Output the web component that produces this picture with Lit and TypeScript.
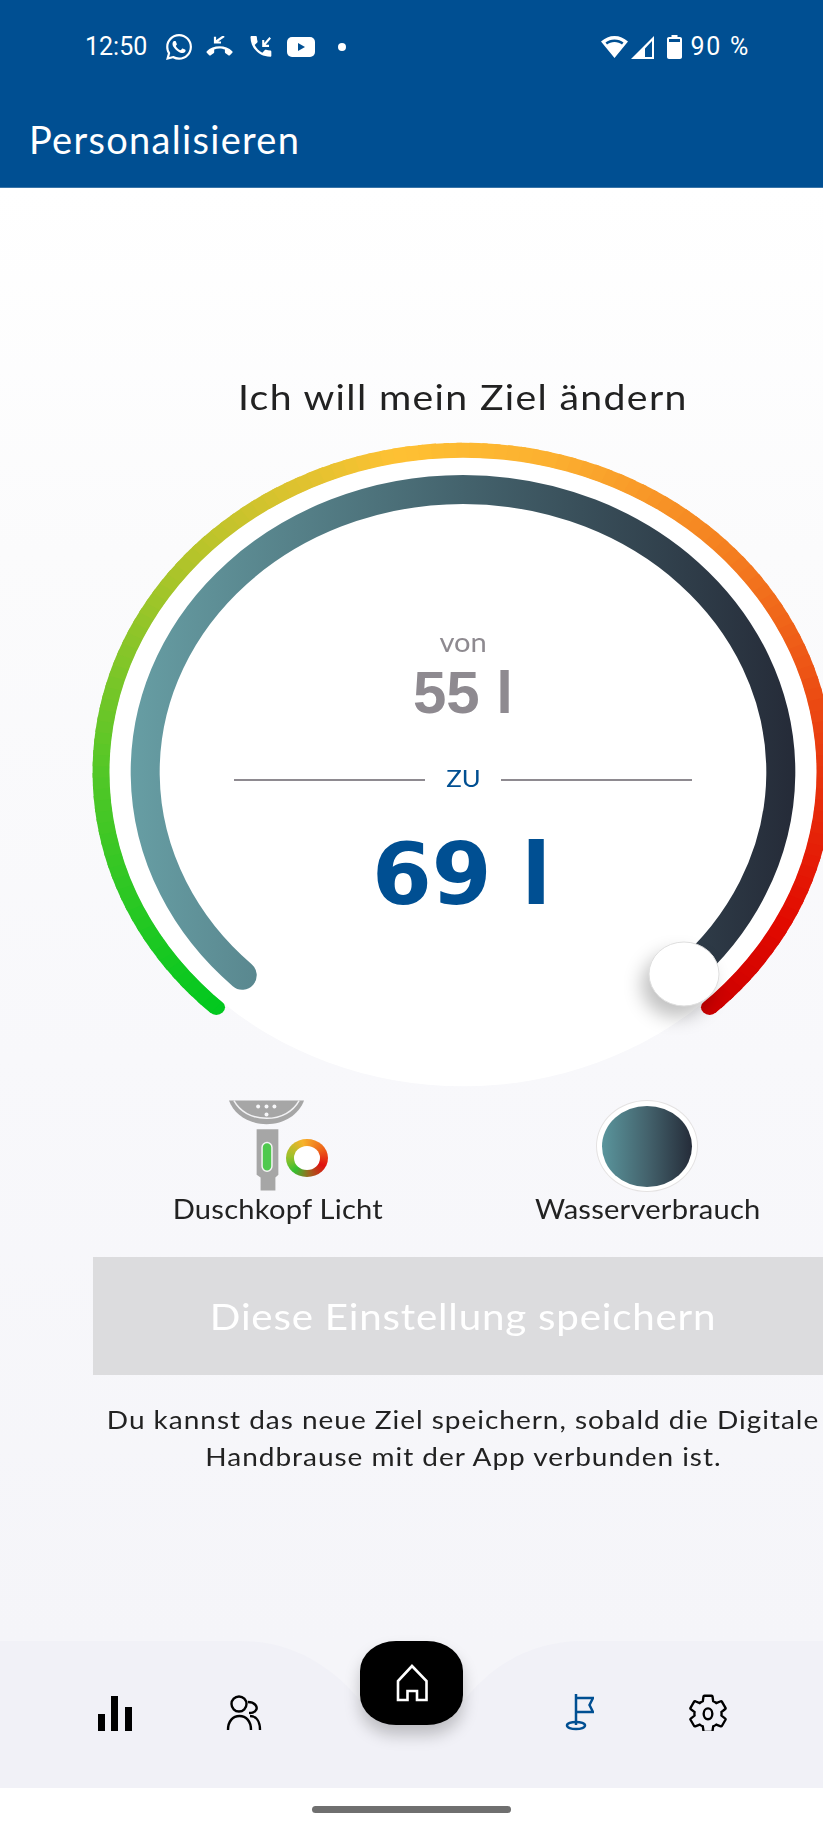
import { LitElement, html, css, svg } from "lit";
import { customElement } from "lit/decorators.js";

const CX = 463, CY = 772, SX = 1.125;
const STOPS: [number, number[]][] = [
  [0, [2, 200, 31]], [0.17, [82, 199, 39]], [0.33, [184, 196, 42]], [0.46, [254, 193, 51]],
  [0.55, [252, 176, 48]], [0.67, [244, 127, 32]], [0.83, [232, 52, 13]], [0.93, [226, 10, 0]], [1, [205, 0, 0]],
];
function colorAt(t: number) {
  for (let i = 1; i < STOPS.length; i++) {
    if (t <= STOPS[i][0]) {
      const [a, ca] = STOPS[i - 1], [b, cb] = STOPS[i];
      const f = (t - a) / (b - a);
      return `rgb(${ca.map((v, k) => Math.round(v + (cb[k] - v) * f)).join(",")})`;
    }
  }
  return "rgb(205,0,0)";
}
function pt(r: number, deg: number) {
  // deg measured clockwise from straight down
  const a = (deg * Math.PI) / 180;
  return [-Math.sin(a) * r, Math.cos(a) * r];
}
function arc(r: number, d0: number, d1: number) {
  const [x0, y0] = pt(r, d0), [x1, y1] = pt(r, d1);
  return `M${x0.toFixed(2)} ${y0.toFixed(2)}A${r} ${r} 0 ${d1 - d0 > 180 ? 1 : 0} 1 ${x1.toFixed(2)} ${y1.toFixed(2)}`;
}
const START = 43, END = 317, N = 137;
const segs = Array.from({ length: N }, (_, i) => {
  const t0 = i / N, t1 = (i + 1) / N;
  const d0 = START + (END - START) * t0, d1 = START + (END - START) * Math.min(1, t1 + 0.003);
  return { d: arc(321.5, d0, d1), c: colorAt((t0 + t1) / 2) };
});
const [gx, gy] = pt(321.5, START), [rx, ry] = pt(321.5, END);

@customElement("app-root")
export class AppRoot extends LitElement {
  static styles = css`
    :host { display: flex; flex-direction: column; width: 823px; height: 1832px; overflow: hidden; background: #fff; font-family: Lato, "Liberation Sans", sans-serif; color: #222; }
    header { height: 188px; flex: none; box-sizing: border-box; background: #004f92; border-bottom: 1px solid #3a75a8; color: #fff; }
    .status { height: 94px; box-sizing: border-box; padding: 34px 73px 0 85px; display: flex; justify-content: space-between; align-items: flex-start; font-family: Roboto, sans-serif; font-size: 25px; line-height: 26px; }
    .group { display: flex; align-items: center; height: 26px; }
    .group svg { display: block; fill: #fff; flex: none; }
    .pct { margin-left: 9px; letter-spacing: 1.7px; }
    .title { margin-left: 29px; font-size: 38px; line-height: 44px; margin-top: 23px; letter-spacing: 1.3px; font-weight: 400; }
    .main { height: 1453px; flex: none; display: flex; flex-direction: column; box-sizing: border-box; width: 740px; margin-left: 93px; padding-top: 188px; }
    .bg { position: absolute; left: 0; width: 823px; top: 188px; height: 1453px; background: linear-gradient(#fff 0%, #fbfbfc 25%, #f8f8fb 60%, #f5f5f9 100%); }
    .wide { display: inline-block; transform: scaleX(1.12); white-space: nowrap; }
    .head { position: relative; text-align: center; font-size: 35px; line-height: 40px; color: #222; height: 40px; letter-spacing: 1.2px; }
    .gauge { position: relative; height: 660px; margin-top: 14px; }
    .gauge > svg { display: block; overflow: visible; }
    .knob { fill: #fff; stroke: #dedede; stroke-width: 1; filter: drop-shadow(-7px 11px 9px rgba(0, 0, 0, 0.24)); }
    .center { position: absolute; inset: 0; box-sizing: border-box; padding-top: 197px; display: flex; flex-direction: column; align-items: center; }
    .von { font-size: 26px; line-height: 30px; color: #8e8a90; }
    .old { font-family: "Liberation Sans", sans-serif; font-weight: 700; font-size: 60px; line-height: 58px; color: #8e8a90; margin-top: 7px; }
    .div { width: 458px; height: 30px; margin-top: 43px; display: flex; align-items: center; color: #004f92; }
    .div i { flex: 1; height: 2px; background: #8e8a90; }
    .div span { width: 76px; text-align: center; font-size: 23px; line-height: 26px; }
    .div > span { padding-bottom: 4px; }
    .div .wide { width: auto; }
    .new { font-family: "DejaVu Sans", sans-serif; font-weight: 700; font-size: 86px; line-height: 85px; color: #004f92; margin-top: 37px; margin-right: 3px; white-space: pre; }
    .legend { position: relative; display: grid; grid-template-columns: 1fr 1fr; margin-top: 10px; }
    .cell { display: flex; flex-direction: column; align-items: center; }
    .cell svg { display: block; }
    .lbl { font-size: 26px; line-height: 30px; margin-top: 2px; color: #222; letter-spacing: 0.2px; }
    .disc { width: 102px; height: 92px; box-sizing: border-box; border-radius: 50%; border: 1px solid #e4e2e2; background: #fff; display: flex; align-items: center; justify-content: center; position: relative; left: -1px; }
    .disc b { display: block; width: 90px; height: 81px; border-radius: 50%; background: linear-gradient(90deg, #5a959c, #44636d 50%, #252c39); }
    .ring { width: 42px; height: 38px; box-sizing: border-box; border-radius: 50%; background: conic-gradient(from 225deg, #35c030 0deg, #9cc02a 50deg, #f7b32b 120deg, #ee6a1a 190deg, #e01010 250deg, #9a6a20 310deg, #35c030 360deg); display: flex; align-items: center; justify-content: center; }
    .ring u { display: block; width: 26px; height: 24px; border-radius: 50%; background: #fff; }
    .shower { display: flex; align-items: flex-start; height: 92px; width: 100px; position: relative; }
    .shower .ring { margin-top: 39px; margin-left: -21px; position: relative; flex: none; }
    .btn { position: relative; height: 118px; margin-top: 33px; background: #dcdcde; color: #fff; display: flex; align-items: center; justify-content: center; font-size: 36px; letter-spacing: 0.7px; }
    .note { position: relative; margin-top: 26px; text-align: center; font-size: 25px; line-height: 37px; color: #222; letter-spacing: 0.87px; }
    .note div { height: 37px; }
    nav { position: relative; height: 147px; flex: none; background: #f1f1f7; display: grid; grid-template-columns: 129px 129px 206px 129px 129px; padding-left: 50.5px; box-sizing: border-box; }
    .notch { position: absolute; left: 0; top: 0; }
    .item { position: relative; height: 108px; display: flex; align-items: flex-end; justify-content: center; padding-bottom: 18px; box-sizing: border-box; }
    .item svg { display: block; }
    .fabwrap { position: relative; display: flex; justify-content: center; }
    .fab { width: 103px; height: 84px; background: #000; border-radius: 36px / 30px; display: flex; align-items: center; justify-content: center; box-shadow: 0 10px 16px rgba(0, 0, 0, 0.22); }
    .foot { flex: 1; display: flex; justify-content: center; padding-top: 18px; }
    .foot i { display: block; width: 199px; height: 7px; border-radius: 4px; background: #6f6f6f; }
  `;

  private gauge() {
    return html`<svg width="740" height="660" viewBox="93 430 740 660">
      <defs>
        <linearGradient id="inner" gradientUnits="userSpaceOnUse" x1="130" y1="0" x2="795" y2="0">
          <stop offset="0" stop-color="#679ea4" /><stop offset="0.5" stop-color="#44636d" /><stop offset="1" stop-color="#252b38" />
        </linearGradient>
      </defs>
      <g transform="translate(${CX} ${CY}) scale(${SX} 1)">
        <circle cx=${gx} cy=${gy} r="7.75" fill=${colorAt(0)} />
        <circle cx=${rx} cy=${ry} r="7.75" fill=${colorAt(1)} />
        ${segs.map((s) => svg`<path d=${s.d} fill="none" stroke=${s.c} stroke-width="15.5" />`)}
      </g>
      <ellipse cx=${CX} cy=${CY} rx="353.5" ry="314.2" fill="#fff" />
      <path d="M${CX + pt(282.5, 44)[0] * SX} ${CY + pt(282.5, 44)[1]}A${282.5 * SX} 282.5 0 1 1 ${CX + pt(282.5, 316)[0] * SX} ${CY + pt(282.5, 316)[1]}"
        fill="none" stroke="url(#inner)" stroke-width="29" stroke-linecap="round" />
      <ellipse class="knob" cx="684" cy="974" rx="35" ry="32" />
    </svg>`;
  }

  private showerHead() {
    return html`<svg width="80" height="92" viewBox="228 1100 80 92">
      <path d="M229 1100H305C300 1114 285 1124 267 1124S234 1114 229 1100Z" fill="#a6a6a6" />
      <path d="M234 1100C240 1111 252 1118 267 1118S294 1111 300 1100" fill="none" stroke="#f2f2f4" stroke-width="1.5" />
      <g fill="#f7f7f9"><circle cx="258.5" cy="1106" r="2" /><circle cx="267" cy="1106" r="2" /><circle cx="275" cy="1106" r="2" /><circle cx="267" cy="1114" r="2" /></g>
      <path d="M257 1129H279V1175L276 1178V1191H261V1178L257 1175Z" fill="#a6a6a6" />
      <rect x="262.5" y="1142.5" width="10" height="29" rx="5" fill="#4fc94e" stroke="#f4f4f4" stroke-width="1.5" />
    </svg>`;
  }

  render() {
    return html`
      <header>
        <div class="status">
          <div class="group">
            <span>12:50</span>
            <svg style="margin-left:19px" width="26" height="26" viewBox="0 0 24 24"><path d="M17.472 14.382c-.297-.149-1.758-.867-2.03-.967-.273-.099-.471-.148-.67.15-.197.297-.767.966-.94 1.164-.173.199-.347.223-.644.075-.297-.15-1.255-.463-2.39-1.475-.883-.788-1.48-1.761-1.653-2.059-.173-.297-.018-.458.13-.606.134-.133.298-.347.446-.52.149-.174.198-.298.298-.497.099-.198.05-.371-.025-.52-.075-.149-.669-1.612-.916-2.207-.242-.579-.487-.5-.669-.51-.173-.008-.371-.01-.57-.01-.198 0-.52.074-.792.372-.272.297-1.04 1.016-1.04 2.479 0 1.462 1.065 2.875 1.213 3.074.149.198 2.096 3.2 5.077 4.487.709.306 1.262.489 1.694.625.712.227 1.36.195 1.871.118.571-.085 1.758-.719 2.006-1.413.248-.694.248-1.289.173-1.413-.074-.124-.272-.198-.57-.347m-5.421 7.403h-.004a9.87 9.87 0 01-5.031-1.378l-.361-.214-3.741.982.998-3.648-.235-.374a9.86 9.86 0 01-1.51-5.26c.001-5.45 4.436-9.884 9.888-9.884 2.64 0 5.122 1.03 6.988 2.898a9.825 9.825 0 012.893 6.994c-.003 5.45-4.437 9.884-9.885 9.884m8.413-18.297A11.815 11.815 0 0012.05 0C5.495 0 .16 5.335.157 11.892c0 2.096.547 4.142 1.588 5.945L.057 24l6.305-1.654a11.882 11.882 0 005.683 1.448h.005c6.554 0 11.89-5.335 11.893-11.893a11.821 11.821 0 00-3.48-8.413z" /></svg>
            <svg style="margin-left:14px" width="27" height="22" viewBox="0 0 27 22"><path d="M13.5 9.5c-1.9 0-3.7.5-5.3 1.1v2.7c0 .4-.2.7-.6.9-1 .5-2 1.2-2.8 2-.2.2-.5.3-.8.3-.3 0-.6-.1-.8-.3l-2.4-2.4c-.2-.2-.3-.5-.3-.8 0-.3.1-.5.3-.8C4 9.2 8.5 7.3 13.5 7.3s9.5 1.9 12.8 4.9c.2.3.3.5.3.8 0 .3-.1.6-.3.8l-2.4 2.4c-.2.2-.5.3-.8.3-.3 0-.6-.1-.8-.3-.8-.8-1.8-1.5-2.8-2-.4-.2-.6-.5-.6-.9v-2.7c-1.6-.6-3.5-1.1-5.4-1.1z" transform="translate(0 3)" /><path d="M9 .8V6.5H15M9.5 6L18 0" fill="none" stroke="#fff" stroke-width="2.2" /></svg>
            <svg style="margin-left:17px" width="23" height="22" viewBox="3 3 19 19"><path d="M6.62 10.79c1.44 2.83 3.76 5.14 6.59 6.59l2.2-2.2c.27-.27.67-.36 1.02-.24 1.12.37 2.33.57 3.57.57.55 0 1 .45 1 1V20c0 .55-.45 1-1 1-9.39 0-17-7.61-17-17 0-.55.45-1 1-1h3.5c.55 0 1 .45 1 1 0 1.25.2 2.45.57 3.57.11.35.03.74-.25 1.02l-2.2 2.2z" /><path d="M14 6.5V11.5H19M14.5 11L20 4.5" fill="none" stroke="#fff" stroke-width="1.8" /></svg>
            <svg style="margin-left:14px" width="28" height="20" viewBox="0 0 28 20"><rect width="28" height="20" rx="5" /><path d="M11 6L18 10L11 14Z" fill="#004f92" /></svg>
            <svg style="margin-left:23px" width="8" height="8" viewBox="0 0 8 8"><circle cx="4" cy="4" r="4" /></svg>
          </div>
          <div class="group">
            <svg width="27" height="22" viewBox="0 0 27 22"><path d="M13.5 0C8.5 0 4 2 0 5.5L13.5 22L27 5.5C23 2 18.5 0 13.5 0ZM13.5 3.5C17 3.5 20 4.6 22.5 6.6L21 8.5C19 6.9 16.4 6 13.5 6S8 6.9 6 8.5L4.5 6.6C7 4.6 10 3.5 13.5 3.5Z" fill-rule="evenodd" /></svg>
            <svg style="margin-left:3px" width="23" height="23" viewBox="0 0 23 23"><path d="M23 0V23H0ZM21 5L14 12.5V21H21Z" fill-rule="evenodd" /></svg>
            <svg style="margin-left:13px" width="15" height="24" viewBox="0 0 15 24"><path d="M4.5 0H10.5V2H13C14.1 2 15 2.9 15 4V22C15 23.1 14.1 24 13 24H2C.9 24 0 23.1 0 22V4C0 2.9.9 2 2 2H4.5ZM2 4V7H13V4Z" fill-rule="evenodd" /></svg>
            <span class="pct">90 %</span>
          </div>
        </div>
        <div class="title">Personalisieren</div>
      </header>
      <div class="bg"></div>
      <div class="main">
        <div class="head"><span class="wide">Ich will mein Ziel ändern</span></div>
        <div class="gauge">
          ${this.gauge()}
          <div class="center">
            <div class="von"><span class="wide">von</span></div>
            <div class="old">55 l</div>
            <div class="div"><i></i><span><span class="wide">ZU</span></span><i></i></div>
            <div class="new">69 l</div>
          </div>
        </div>
        <div class="legend">
          <div class="cell">
            <div class="shower">${this.showerHead()}<div class="ring"><u></u></div></div>
            <div class="lbl"><span class="wide">Duschkopf Licht</span></div>
          </div>
          <div class="cell">
            <div class="disc"><b></b></div>
            <div class="lbl"><span class="wide">Wasserverbrauch</span></div>
          </div>
        </div>
        <div class="btn"><span class="wide">Diese Einstellung speichern</span></div>
        <div class="note">
          <div><span class="wide">Du kannst das neue Ziel speichern, sobald die Digitale</span></div>
          <div><span class="wide">Handbrause mit der App verbunden ist.</span></div>
        </div>
      </div>
      <nav>
        <svg class="notch" width="823" height="147" viewBox="0 0 823 147"><path d="M240 0C295 0 335 28 362 62H462C488 28 528 0 582 0Z" fill="#f5f5f9" /></svg>
        <div class="item"><svg width="34" height="35" viewBox="98 1695 34 35"><path d="M98 1713H105V1730H98ZM111 1695H118V1730H111ZM125 1706H132V1730H125Z" fill="#000" /></svg></div>
        <div class="item"><svg width="36" height="36" viewBox="226 1696 36 36" fill="none" stroke="#000" stroke-width="2.4"><ellipse cx="239" cy="1705" rx="7.5" ry="7.5" /><path d="M228 1731C228 1722 233 1717 239.5 1717S251 1722 251 1731" /><path d="M248 1703C255 1703 258 1708 256 1711C255 1713 252 1714 249 1714" /><path d="M250 1717C256 1717 260 1722 260 1731" /></svg></div>
        <div class="fabwrap"><div class="fab"><svg width="34" height="40" viewBox="394.5 1663 34 40" fill="none" stroke="#fff" stroke-width="2.6"><path d="M411.5 1666L426 1681V1700H416.5V1691H407V1700H397.5V1681Z" /></svg></div></div>
        <div class="item"><svg width="30" height="38" viewBox="564 1695 30 38" fill="none" stroke="#004f92" stroke-width="2.5"><path d="M576 1696V1727M576 1700H593L589.5 1707L593 1714H576" /><ellipse cx="576" cy="1727.5" rx="9" ry="3.6" /></svg></div>
        <div class="item"><svg width="38" height="38" viewBox="1.5 0.5 21 21" fill="none" stroke="#000" stroke-width="1.3"><path d="M19.43 12.98c.04-.32.07-.64.07-.98 0-.34-.03-.66-.07-.98l2.11-1.65c.19-.15.24-.42.12-.64l-2-3.46c-.09-.16-.26-.25-.44-.25-.06 0-.12.01-.17.03l-2.49 1c-.52-.4-1.08-.73-1.69-.98l-.38-2.65C14.46 2.18 14.25 2 14 2h-4c-.25 0-.46.18-.49.42l-.38 2.65c-.61.25-1.17.59-1.69.98l-2.49-1c-.06-.02-.12-.03-.18-.03-.17 0-.34.09-.43.25l-2 3.46c-.13.22-.07.49.12.64l2.11 1.65c-.04.32-.07.65-.07.98 0 .33.03.66.07.98l-2.11 1.65c-.19.15-.24.42-.12.64l2 3.46c.09.16.26.25.44.25.06 0 .12-.01.17-.03l2.49-1c.52.4 1.08.73 1.69.98l.38 2.65c.03.24.24.42.49.42h4c.25 0 .46-.18.49-.42l.38-2.65c.61-.25 1.17-.59 1.69-.98l2.49 1c.06.02.12.03.18.03.17 0 .34-.09.43-.25l2-3.46c.12-.22.07-.49-.12-.64l-2.11-1.65z" /><ellipse cx="12" cy="12" rx="2.4" ry="3" /></svg></div>
      </nav>
      <div class="foot"><i></i></div>
    `;
  }
}
